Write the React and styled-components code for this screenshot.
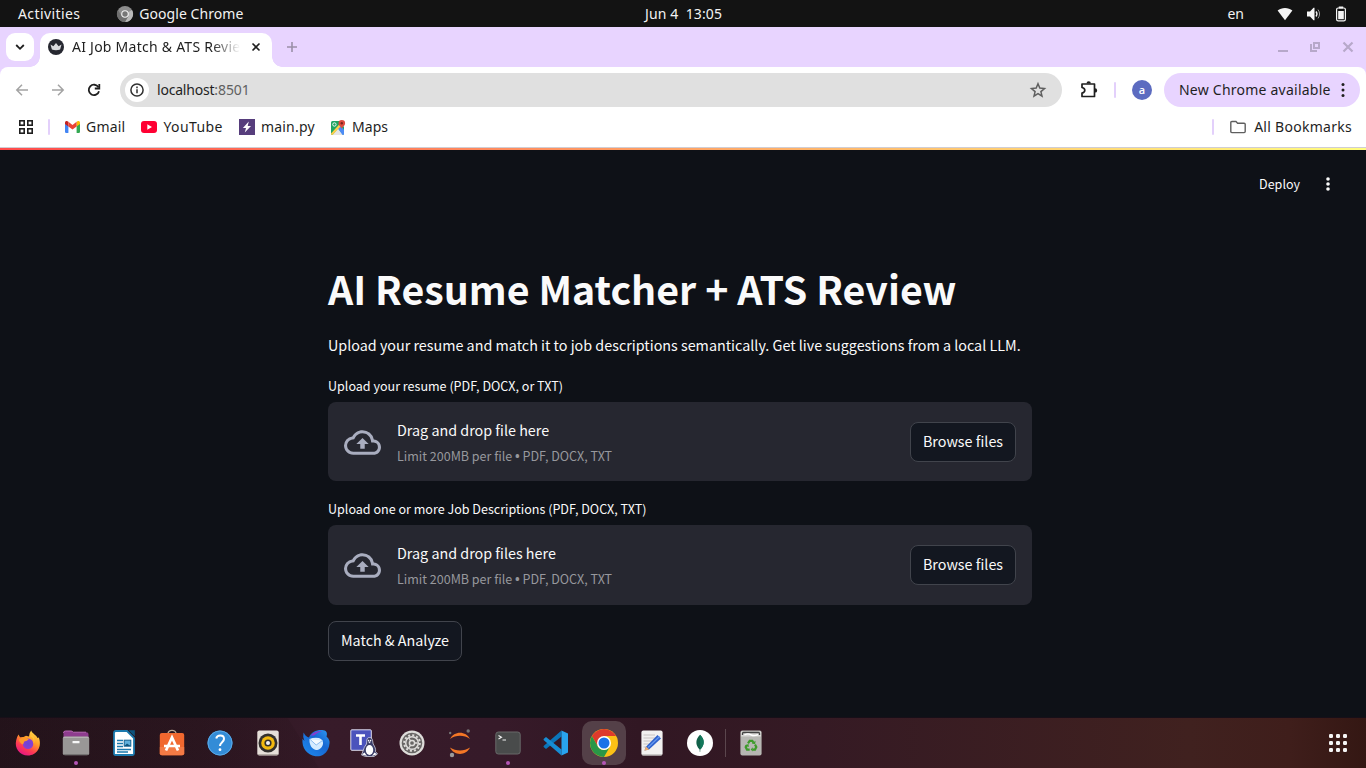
import React from "react";
import styled, { createGlobalStyle } from "styled-components";

const ui = '"Noto Sans", "Open Sans", sans-serif';
const page = '"Noto Sans CJK SC", "Noto Sans", sans-serif';

const Global = createGlobalStyle`
  * { box-sizing: border-box; }
  body { margin: 0; background: #0e1117; overflow: hidden; }
  button { font: inherit; color: inherit; cursor: pointer; }
  svg { display: block; flex: none; overflow: visible; }
`;

const Desktop = styled.div`
  width: 1366px;
  height: 768px;
  display: flex;
  flex-direction: column;
  background: #0e1117;
  font-family: ${ui};
  font-size: 14px;
`;

const Label = styled.span`
  white-space: pre;
  line-height: 20px;
  letter-spacing: ${(p) => p.$track || 0}px;
`;

/* System bar */
const SystemBar = styled.header`
  height: 27px;
  background: #131313;
  color: #f2f2f2;
  display: grid;
  grid-template-columns: 1fr auto 1fr;
  align-items: center;
  padding: 0 19px 0 18px;
`;
const SystemLeft = styled.div`
  display: flex;
  align-items: center;
  svg { margin: 0 6px 0 37px; }
`;
const Clock = styled(Label)`
  padding-left: 2px;
`;
const SystemRight = styled.div`
  display: flex;
  align-items: center;
  justify-content: flex-end;
  svg:first-of-type { margin-left: 33px; }
`;
const StatusIcons = styled.div`
  display: flex;
  align-items: center;
  gap: 13px;
`;

/* Browser */
const TabStrip = styled.div`
  height: 40px;
  background: #e8d4ff;
  display: flex;
  align-items: flex-end;
  padding: 0 12px 0 6px;
`;
const TabSearch = styled.button`
  width: 28px;
  height: 28px;
  margin: 0 6px 6px 0;
  border: 0;
  border-radius: 9px;
  background: #fff;
  display: grid;
  place-items: center;
  padding: 0;
`;
const Tab = styled.div`
  position: relative;
  width: 232px;
  height: 34px;
  border-radius: 10px 10px 0 0;
  background: #fff;
  color: #1f1f1f;
  display: flex;
  align-items: center;
  padding: 0 10px 6px 8px;
  &::before, &::after {
    content: "";
    position: absolute;
    bottom: 0;
    width: 10px;
    height: 10px;
  }
  &::before { right: 100%; background: radial-gradient(circle at 0 0, transparent 9.5px, #fff 10px); }
  &::after { left: 100%; background: radial-gradient(circle at 100% 0, transparent 9.5px, #fff 10px); }
`;
const TabTitle = styled(Label)`
  width: 168px;
  margin: 0 11px 0 8px;
  overflow: hidden;
  mask-image: linear-gradient(to right, #000 140px, transparent 168px);
`;
const NewTab = styled.div`
  margin: 0 auto 14px 14px;
`;
const WindowControls = styled.div`
  display: flex;
  align-items: center;
  gap: 21px;
  margin-bottom: 14px;
`;
const Chrome = styled.div`
  height: 81px;
  background: #e8d4ff;
`;
const ChromeInner = styled.div`
  height: 100%;
  background: #fff;
  border-radius: 8px 8px 0 0;
  border-bottom: 1px solid #cfcdd4;
`;
const Toolbar = styled.div`
  height: 46px;
  display: flex;
  align-items: center;
  padding: 0 6px 0 14px;
`;
const NavButtons = styled.div`
  display: flex;
  gap: 20px;
  margin-right: 18px;
`;
const AddressBar = styled.div`
  width: 942px;
  height: 34px;
  border-radius: 17px;
  background: #e0e0e0;
  color: #1f1f1f;
  display: flex;
  align-items: center;
  padding: 0 16px 0 5px;
  > svg { margin-left: auto; }
`;
const SiteInfo = styled.span`
  width: 24px;
  height: 24px;
  border-radius: 50%;
  background: #fff;
  display: grid;
  place-items: center;
  margin-right: 8px;
`;
const Port = styled(Label)`
  color: #5f5f5f;
`;
const Divider = styled.span`
  width: 2px;
  height: 16px;
  background: #e3d0fb;
  border-radius: 1px;
`;
const ToolbarActions = styled.div`
  display: flex;
  align-items: center;
  margin-left: 16px;
  gap: 16px;
`;
const Avatar = styled.span`
  width: 20px;
  height: 20px;
  border-radius: 50%;
  background: #5c6bc0;
  color: #fff;
  font: 600 11px/19px "Open Sans", sans-serif;
  text-align: center;
`;
const UpdateChip = styled.button`
  width: 196px;
  height: 34px;
  margin-left: auto;
  border: 0;
  border-radius: 17px;
  background: #e8d4ff;
  color: #1f1f1f;
  display: flex;
  align-items: center;
  justify-content: space-between;
  padding: 0 15px;
`;
const BookmarksBar = styled.div`
  height: 28px;
  display: flex;
  align-items: center;
  padding: 0 14px 0 18px;
  color: #1f1f1f;
`;
const BookmarkList = styled.div`
  display: flex;
  align-items: center;
  gap: 16px;
  margin: 0 auto 0 15px;
`;
const Bookmark = styled.span`
  display: flex;
  align-items: center;
  gap: 6px;
`;
const AllBookmarks = styled.span`
  display: flex;
  align-items: center;
  gap: 8px;
  margin-left: 16px;
`;

/* Page */
const Page = styled.main`
  height: 569px;
  display: flex;
  flex-direction: column;
  color: #fafafa;
  font-family: ${page};
  background: #0e1117;
`;
const Decoration = styled.div`
  height: 2px;
  background: linear-gradient(90deg, #ff4b4b, #fffd80);
`;
const PageHeader = styled.div`
  height: 68px;
  display: flex;
  align-items: center;
  justify-content: flex-end;
  gap: 26px;
  padding-right: 36px;
  font-size: 12.53px;
`;
const Content = styled.div`
  width: 704px;
  margin-left: 328px;
  padding-top: 40px;
`;
const Title = styled.h1`
  margin: 0;
  font-size: 39.35px;
  font-weight: 700;
  line-height: 60px;
  white-space: nowrap;
`;
const Intro = styled.p`
  margin: 15px 0 17px;
  font-size: 14.33px;
  line-height: 24px;
  white-space: nowrap;
`;
const Field = styled.section`
  margin-bottom: 16px;
`;
const FieldLabel = styled.div`
  height: 28px;
  font-size: 12.56px;
  line-height: 24px;
`;
const Dropzone = styled.div`
  height: ${(p) => p.$height}px;
  border-radius: 8px;
  background: #262730;
  display: flex;
  align-items: flex-start;
  padding: 20px 16px 0;
  > svg { margin-top: 2px; }
`;
const DropText = styled.div`
  display: flex;
  flex-direction: column;
  margin: -4px auto 0 16px;
  font-size: 14.33px;
  line-height: 24px;
`;
const Hint = styled.small`
  margin-top: 2px;
  font-size: 12.53px;
  color: #97989d;
`;
const Bullet = styled.span`
  font-family: "Open Sans", sans-serif;
  font-weight: 700;
`;
const Button = styled.button`
  width: ${(p) => p.$width}px;
  height: 40px;
  border: 1px solid #41444c;
  border-radius: 8px;
  background: #131720;
  padding: 0 0 4px;
  font-size: 14.33px;
  white-space: nowrap;
`;

/* Dock */
const Dock = styled.footer`
  height: 51px;
  border-top: 1px solid #170f18;
  background:
    linear-gradient(58deg, rgba(20, 8, 12, 0.1) 0 270px, transparent 271px),
    linear-gradient(90deg, #25141c 0, #2d1721 200px, #371b29 320px, #361a29 500px, #311723 640px, #351a24 820px, #40211f 1190px, #3f1e1b 1290px, #341713 1366px);
  display: flex;
  align-items: center;
  padding: 0 4px;
`;
const DockItem = styled.div`
  position: relative;
  width: 44px;
  height: 44px;
  margin: 0 2px;
  border-radius: 10px;
  display: grid;
  place-items: center;
  background: ${(p) => (p.$active ? "#544048" : "transparent")};
  &::after {
    content: "";
    display: ${(p) => (p.$running ? "block" : "none")};
    position: absolute;
    left: 20px;
    bottom: 0;
    width: 4px;
    height: 4px;
    border-radius: 50%;
    background: #b455b6;
  }
`;
const DockDivider = styled.span`
  width: 1px;
  height: 28px;
  background: #5b464d;
  margin: 0 1px;
`;
const AppGrid = styled.div`
  margin-left: auto;
  margin-right: 15px;
`;

const ChromeMono = () => (
  <svg width="16" height="16" viewBox="0 0 16 16">
    <circle cx="8" cy="8" r="8" fill="#8c8c8c" />
    <path d="M8 8 15 4A8 8 0 0 1 8 16L11.5 10Z" fill="#b9b9b9" />
    <path d="M1 4A8 8 0 0 0 8 16L11.4 10 4.6 10Z" fill="#6f6f6f" />
    <circle cx="8" cy="8" r="3.8" fill="#f2f2f2" />
    <circle cx="8" cy="8" r="2.7" fill="#777" />
  </svg>
);
const Wifi = () => (
  <svg width="16" height="14" viewBox="0 0 16 14"><path d="M8 13.3.6 3.5C2.6 1.7 5.2.9 8 .9s5.4.8 7.4 2.6Z" fill="#f5f5f5" /></svg>
);
const Volume = () => (
  <svg width="16" height="16" viewBox="0 0 16 16" fill="none" stroke="#f5f5f5" strokeWidth="1.3">
    <path d="M1 5.500h3L7.500 1.800h1v12.400h-1L4 10.500H1Z" fill="#f5f5f5" stroke="none" />
    <path d="M10 5.500q2 2.500 0 5" />
    <path d="M12 3.600q3.200 4.400 0 8.800" stroke="#999" strokeWidth="1" />
  </svg>
);
const Battery = () => (
  <svg width="12" height="16" viewBox="0 0 12 16">
    <path d="M3.800.5h4.400v2H3.800Z" fill="#f5f5f5" />
    <rect x="1.600" y="2" width="8.800" height="12.800" rx="1.600" fill="none" stroke="#f5f5f5" strokeWidth="1.200" />
    <rect x="3.200" y="5" width="5.600" height="8.200" fill="#f5f5f5" />
  </svg>
);
const Crown = () => (
  <svg width="16" height="16" viewBox="0 0 16 16">
    <circle cx="8" cy="8" r="8" fill="#262730" />
    <path d="M2.500 5.400 5.400 7.200 8 3.900l2.600 3.300 2.900-1.800-1.400 5.200q-4.100 1.300-8.200 0Z" fill="#d9dade" />
  </svg>
);
const Dots = ({ gap = 5, r = 1.6, color }) => (
  <svg width="4" height="16" viewBox="0 0 4 16" fill={color}>
    <circle cx="2" cy={8 - gap} r={r} /><circle cx="2" cy="8" r={r} /><circle cx="2" cy={8 + gap} r={r} />
  </svg>
);
const Cloud = () => (
  <svg width="37" height="37" viewBox="0 0 24 24" fill="#a9adbf">
    <path d="M19.35 10.04A7.49 7.49 0 0 0 12 4C9.110 4 6.600 5.640 5.350 8.040A5.994 5.994 0 0 0 0 14c0 3.310 2.690 6 6 6h13c2.760 0 5-2.240 5-5 0-2.640-2.050-4.780-4.650-4.960zM19 18H6c-2.210 0-4-1.790-4-4 0-2.050 1.530-3.760 3.560-3.970l1.070-.11.5-.95A5.469 5.469 0 0 1 12 6c2.620 0 4.880 1.860 5.390 4.430l.3 1.500 1.530.11A2.980 2.980 0 0 1 22 15c0 1.650-1.350 3-3 3zM8 13h2.550v3h2.900v-3H16l-4-4z" />
  </svg>
);

const Gmail = () => (
  <svg width="15" height="12" viewBox="0 0 15 12">
    <path d="M0 2v8.800Q0 12 1.200 12H3.400V4.200Z" fill="#4285f4" />
    <path d="M15 2v8.800Q15 12 13.800 12H11.600V4.200Z" fill="#34a853" />
    <path d="M11.600.8 11.600 5.500 15 3V1.800C15 .1 13.200-.5 11.600.8Z" fill="#fbbc04" />
    <path d="M0 3 3.400 5.500V.8C1.800-.5 0 .1 0 1.800Z" fill="#c5221f" />
    <path d="M3.400.8 7.500 3.900 11.600.8V5.500L7.500 8.600 3.400 5.500Z" fill="#ea4335" />
  </svg>
);
const YouTube = () => (
  <svg width="16" height="12" viewBox="0 0 16 12"><rect width="16" height="12" rx="3" fill="#ff0033" /><path d="M6.300 3.300 11 6 6.300 8.700Z" fill="#fff" /></svg>
);
const Bolt = () => (
  <svg width="16" height="16" viewBox="0 0 16 16"><rect width="16" height="16" fill="#563d7c" /><path d="M9.800 2.500 3.900 9H7l-1.200 4.600L12 6.900H8.700Z" fill="#fff" /></svg>
);
const MapsIcon = () => (
  <svg width="15" height="15" viewBox="0 0 15 15">
    <path d="M0 2.500Q0 1 1.500 1H9L13 7V13.500Q13 15 11.500 15H1.500Q0 15 0 13.500Z" fill="#1fa463" />
    <path d="M1.500 15 7 8.500 12.500 15Z" fill="#e6e6e6" />
    <path d="M7 8.500 9.600 6 13 9.600V13.500Q13 15 11.500 15Z" fill="#4c8bf5" />
    <path d="M0 13.500 9.500 3 11 5 1.500 15Q0 15 0 13.500Z" fill="#ffd04b" />
    <circle cx="3.400" cy="4.500" r="1.700" fill="none" stroke="#fff" strokeWidth=".9" />
    <path d="M10.800 9C10.500 6.800 7.500 6 7.500 3.200a3.300 3.300 0 0 1 6.600 0C14.100 6 11.100 6.800 10.800 9Z" fill="#dd4b3e" />
    <circle cx="10.800" cy="3.200" r="1.200" fill="#7b231e" />
  </svg>
);
const AppsIcon = () => (
  <svg width="16" height="14" viewBox="0 0 16 14" fill="none" stroke="#1f1f1f" strokeWidth="1.600">
    <rect x="1.800" y=".8" width="4.400" height="4.400" /><rect x="9.800" y=".8" width="4.400" height="4.400" />
    <rect x="1.800" y="8.800" width="4.400" height="4.400" /><rect x="9.800" y="8.800" width="4.400" height="4.400" />
  </svg>
);

const Firefox = () => (
  <svg width="26" height="26" viewBox="0 0 26 26">
    <defs>
      <linearGradient id="ff" x1=".8" y1="0" x2=".25" y2="1"><stop offset="0" stopColor="#ffe14a" /><stop offset=".4" stopColor="#ff9a28" /><stop offset=".7" stopColor="#ff3b52" /><stop offset="1" stopColor="#e3118a" /></linearGradient>
      <radialGradient id="ffc"><stop offset="0" stopColor="#6a45d8" /><stop offset="1" stopColor="#8b3fd0" /></radialGradient>
    </defs>
    <path d="M3.500 4.500 5 7.200 8.500 7 11 5.800 14 6.500Q14 3 16.200.5C17.500 4 21.500 5 22.500 8L23.800 7.500C27.500 17 21.500 25.500 13 25.500S-.8 18 1.200 10.200Q1.800 7 3.500 4.500Z" fill="url(#ff)" />
    <circle cx="13" cy="13.800" r="5.300" fill="url(#ffc)" />
    <path d="M4 9.500 8.500 7 13.800 9.200Q12 11 9.300 11.600L8 14.500Q4.500 13 4 9.500Z" fill="#ff9a2a" />
    <path d="M15 6Q20 8 18.500 14 21 9 17 5Z" fill="#ffc83a" />
  </svg>
);
const Files = () => (
  <svg width="28" height="26" viewBox="0 0 28 26">
    <path d="M1.500 3Q1.500 1 3.500 1H9Q10.500 1 11.200 2.200H24.500Q26.500 2.200 26.500 4.200V12H1.500Z" fill="#8e3c8e" />
    <path d="M1.500 3Q1.500 1 3.500 1H9Q10.500 1 11.200 2.200H24" fill="none" stroke="#b86bb5" />
    <rect x=".8" y="6.500" width="26.400" height="18.800" rx="2" fill="#999796" />
    <path d="M1.500 7.300H26.500" stroke="#bcbab9" /><path d="M1.500 24.500H26.500" stroke="#767473" />
    <rect x="10.500" y="11" width="7" height="2.200" rx=".5" fill="#f7f7f7" />
  </svg>
);
const Writer = () => (
  <svg width="22" height="26" viewBox="0 0 22 26">
    <path d="M3 1H14L21 8V23.500Q21 25 19.500 25H2.500Q1 25 1 23.500V3Q1 1 3 1Z" fill="#fff" stroke="#1b79ad" strokeWidth="1.800" />
    <path d="M15.500.2H21.800V6.500Z" fill="#0d547d" />
    <path d="M4 10.500H10M4 13.500H10M4 16.500H10M4 19.500H18M4 22H15" stroke="#1b79ad" strokeWidth="1.400" />
    <rect x="11.200" y="10.200" width="6.600" height="6" fill="#5fb0dc" stroke="#13618f" /><path d="M11.500 16 14 13.500 17.500 16Z" fill="#0d547d" />
  </svg>
);
const Software = () => (
  <svg width="26" height="26" viewBox="0 0 26 26">
    <path d="M9 5V3.800a4 3.500 0 0 1 8 0V5" fill="none" stroke="#bfa994" strokeWidth="1.300" />
    <rect x=".8" y="3" width="24.400" height="22.300" rx="2" fill="#f1682f" /><path d="M.8 17H25.200V23.300Q25.200 25.300 23.200 25.300H2.800Q.8 25.300.8 23.300Z" fill="#f37a45" />
    <path d="M7 20.500 13 7.500 19 20.500M5 16H21" fill="none" stroke="#fff" strokeWidth="2.700" />
  </svg>
);
const Help = () => (
  <svg width="26" height="26" viewBox="0 0 26 26">
    <circle cx="13" cy="13" r="12.500" fill="#338cd7" /><circle cx="13" cy="13" r="12" fill="none" stroke="#5ba9e6" />
    <path d="M9.200 8.500Q10 5.600 13.200 5.600 17 5.600 17 9C17 12 13 12.500 13 16" fill="none" stroke="#fff" strokeWidth="2" /><circle cx="13" cy="19.700" r="1.400" fill="#fff" />
  </svg>
);
const Speaker = () => (
  <svg width="22" height="26" viewBox="0 0 22 26">
    <rect x=".3" y=".5" width="21.400" height="25" rx="2" fill="#e5dfd9" /><path d="M1 24.500H21" stroke="#b5aea7" />
    <circle cx="11" cy="13" r="9.500" fill="#32302e" /><circle cx="11" cy="13" r="6.800" fill="#f2b90f" /><circle cx="11" cy="13" r="3.600" fill="#32302e" /><circle cx="11" cy="13" r="2" fill="#f2f2f2" />
  </svg>
);
const Thunderbird = () => (
  <svg width="28" height="28" viewBox="0 0 28 28">
    <defs><linearGradient id="tb" x1="0" y1="1" x2="1" y2="0"><stop offset="0" stopColor="#1f8df0" /><stop offset=".6" stopColor="#1767d2" /><stop offset="1" stopColor="#2f9cf5" /></linearGradient></defs>
    <path d="M1.500 3.500Q4 8 7 8.500C9.500 2.500 15 .5 21.500 1.200 25 1.800 25.500 4.500 24.500 7.500Q29 11 27 17.500C25 24.500 19.500 28 13.500 27.200 5 26-.5 19 .5 9.800L2.500 12Q.5 7.500 1.500 3.500Z" fill="url(#tb)" />
    <path d="M8.500 6.500Q13 1.500 20 2 15 3.500 12 6.500Z" fill="#873bcf" />
    <path d="M7.500 10Q12 8 17 9 21.500 10.500 21 15C20 19 17 21 14 21 10 20 7 16 7.500 10Z" fill="#d5ebff" />
    <path d="M8.200 10.500 14.200 16 20.500 11.500" fill="#f5faff" stroke="#8dbdf0" />
  </svg>
);
const Teams = () => (
  <svg width="28" height="28" viewBox="0 0 28 28">
    <rect x=".8" y=".8" width="20.500" height="20.500" rx="1" fill="#4b53bc" stroke="#eeeefc" strokeWidth=".9" />
    <path d="M6 6.500H15M10.500 6.500V16" stroke="#fff" strokeWidth="2.600" />
    <path d="M19.500 8.500C23 8.500 22.500 12.500 23.200 15 25 18 26 20 25.500 22.500L27.500 25 24 27.500H15.500L11.500 26 13 22Q14 18 16.500 15C17 12.500 16 8.500 19.500 8.500Z" fill="#3b3e69" stroke="#e7e8f3" strokeWidth=".7" />
    <ellipse cx="19.500" cy="21" rx="3.700" ry="5" fill="#fff" /><path d="M18 12.500H21L19.500 14.500Z" fill="#e8e8f2" /><circle cx="18.600" cy="11.500" r=".7" fill="#fff" /><circle cx="20.600" cy="11.500" r=".7" fill="#fff" />
    <path d="M12 25.500 14.500 23.500 17 27ZM22 27 24.500 23.500 27 25.300Z" fill="#fff" />
  </svg>
);
const Settings = () => (
  <svg width="26" height="26" viewBox="0 0 26 26">
    <circle cx="13" cy="13" r="12.500" fill="#deddda" /><circle cx="13" cy="13" r="10.300" fill="#686665" />
    <circle cx="13" cy="13" r="7.800" fill="none" stroke="#dedcda" strokeWidth="2" strokeDasharray="2.050 2.030" />
    <circle cx="13" cy="13" r="6.300" fill="none" stroke="#dedcda" strokeWidth="1.500" />
    <circle cx="13" cy="13" r="2.600" fill="none" stroke="#dedcda" strokeWidth="1.500" />
    <path d="M15.500 13H18.500M11.700 11 9.800 8M11.700 15 9.800 18" stroke="#dedcda" strokeWidth="1.300" />
  </svg>
);
const Jupyter = () => (
  <svg width="26" height="28" viewBox="0 0 26 28">
    <path d="M3 10C7 1.500 19 1.500 23 10 17 5.800 9 5.800 3 10ZM3 18.500C7 27 19 27 23 18.500 17 22.500 9 22.500 3 18.500Z" fill="#f37726" />
    <circle cx="21.200" cy="2" r="1.700" fill="#767677" /><circle cx="3.200" cy="4" r="1.200" fill="#767677" /><circle cx="5" cy="26" r="2.200" fill="#9b9b9b" />
  </svg>
);
const Terminal = () => (
  <svg width="26" height="24" viewBox="0 0 26 24">
    <rect x=".8" y="1" width="24.400" height="22" rx="2.500" fill="#494b4b" stroke="#686969" />
    <path d="M3.500 4.500 6.500 6.200 3.500 8M7.500 9H11" fill="none" stroke="#f2f2f2" strokeWidth="1.100" />
  </svg>
);
const VSCode = () => (
  <svg width="26" height="26" viewBox="0 0 26 26">
    <path d="M18.500 6.500 3 19 .6 17V16L18.500.4Z" fill="#0b75ba" />
    <path d="M18.500 19.500 3 7 .6 9V10L18.500 25.600Z" fill="#168dd5" />
    <path d="M18.500.4 25 3.500V22.500L18.500 25.600Z" fill="#29a4ef" />
  </svg>
);
const ChromeIcon = () => (
  <svg width="28" height="28" viewBox="0 0 28 28">
    <circle cx="14" cy="14" r="14" fill="#fbc116" />
    <path d="M1.880 7A14 14 0 0 1 26.120 7H14L8 17.500Z" fill="#dd3a2c" />
    <path d="M1.880 7A14 14 0 0 0 14 28L20.060 17.500A7 7 0 0 1 7.940 17.500Z" fill="#299747" />
    <circle cx="14" cy="14" r="7" fill="#fff" /><circle cx="14" cy="14" r="5.500" fill="#1a73e8" />
  </svg>
);
const TextEditor = () => (
  <svg width="22" height="26" viewBox="0 0 22 26">
    <rect x=".4" y=".5" width="21.200" height="25" rx="2" fill="#f2f1f0" /><path d="M1 24.800H21" stroke="#bab8b6" />
    <path d="M2.500 5H14M2.500 8H17M2.500 11H12M2.500 14H10M2.500 17H8" stroke="#c7c4c1" strokeWidth="1.200" />
    <path d="M3.500 20.500 5 16.800 16.500 5 20 8.500 8 19.500Z" fill="#2f62cd" /><path d="M7 17.500 18.500 6.500" stroke="#679af0" strokeWidth="1.200" />
    <path d="M3.300 20.700 5 16.500 8.300 19.500Z" fill="#ecae74" />
  </svg>
);
const Compass = () => (
  <svg width="26" height="26" viewBox="0 0 26 26">
    <circle cx="13" cy="13" r="13" fill="#fff" />
    <path d="M13 4.800C17.800 9 18 15 13.300 19.500L13.200 22H12.800L12.600 19.500C8 15 8.500 9 13 4.800Z" fill="#116149" /><path d="M13 4.800C17.800 9 18 15 13.300 19.500Z" fill="#13795b" />
  </svg>
);
const Trash = () => (
  <svg width="22" height="26" viewBox="0 0 22 26">
    <rect x=".4" y=".5" width="21.200" height="25" rx="2" fill="#b7b7b3" /><path d="M1 1.500H21V6.500H1Z" fill="#d8d7d5" />
    <path d="M2.500 5V3.500Q2.500 2.500 3.500 2.500H18.500Q19.500 2.500 19.500 3.500V5" fill="none" stroke="#444" strokeWidth="1.300" /><path d="M4.500 4.800Q8 3 11 4.800T18 4.600" stroke="#fff" strokeWidth="1.400" fill="none" />
    <g fill="none" stroke="#3d9b2a" strokeWidth="2.200"><path d="M8 13.300 9.700 10.800H12.300L13.500 12.800" /><path d="M15 14.500 16.300 17 15 19.600H12.500" /><path d="M9.700 19.600H7L5.700 17 7 15" /></g>
    <path d="M11.800 13.700 15.200 14 15.500 10.800ZM12.700 17.300V21.600L10.700 19.500ZM4.800 15.500 8.500 14 8.800 17Z" fill="#3d9b2a" />
  </svg>
);

const bookmarks = [
  ["Gmail", Gmail, 0.2],
  ["YouTube", YouTube, 0.42],
  ["main.py", Bolt, 0.22],
  ["Maps", MapsIcon, 0.1],
];
const apps = [
  { Icon: Firefox }, { Icon: Files, running: true }, { Icon: Writer }, { Icon: Software }, { Icon: Help },
  { Icon: Speaker }, { Icon: Thunderbird }, { Icon: Teams }, { Icon: Settings }, { Icon: Jupyter },
  { Icon: Terminal, running: true }, { Icon: VSCode }, { Icon: ChromeIcon, running: true, active: true },
  { Icon: TextEditor }, { Icon: Compass },
];
const uploads = [
  { label: "Upload your resume (PDF, DOCX, or TXT)", prompt: "Drag and drop file here", height: 79 },
  { label: "Upload one or more Job Descriptions (PDF, DOCX, TXT)", prompt: "Drag and drop files here", height: 80 },
];

function Uploader({ label, prompt, height }) {
  return (
    <Field>
      <FieldLabel>{label}</FieldLabel>
      <Dropzone $height={height}>
        <Cloud />
        <DropText>
          <span>{prompt}</span>
          <Hint>Limit 200MB per file <Bullet>•</Bullet> PDF, DOCX, TXT</Hint>
        </DropText>
        <Button $width={106}>Browse files</Button>
      </Dropzone>
    </Field>
  );
}

export default function App() {
  return (
    <Desktop>
      <Global />
      <SystemBar>
        <SystemLeft>
          <Label $track={0.4}>Activities</Label>
          <ChromeMono />
          <Label $track={0.05}>Google Chrome</Label>
        </SystemLeft>
        <Clock $track={0.1}>Jun 4  13:05</Clock>
        <SystemRight>
          <Label>en</Label>
          <StatusIcons><Wifi /><Volume /><Battery /></StatusIcons>
        </SystemRight>
      </SystemBar>

      <TabStrip>
        <TabSearch>
          <svg width="10" height="6" viewBox="0 0 10 6" fill="none" stroke="#1f1f1f" strokeWidth="1.800"><path d="m1.200 1 3.800 3.800L8.800 1" /></svg>
        </TabSearch>
        <Tab>
          <Crown />
          <TabTitle $track={0.25}>AI Job Match &amp; ATS Review</TabTitle>
          <svg width="10" height="10" viewBox="0 0 10 10" stroke="#1f1f1f" strokeWidth="1.600"><path d="m1.500 1.500 7 7m0-7-7 7" /></svg>
        </Tab>
        <NewTab>
          <svg width="12" height="12" viewBox="0 0 12 12" stroke="#9a8fa8" strokeWidth="1.600"><path d="M6 1v10M1 6h10" /></svg>
        </NewTab>
        <WindowControls>
          <svg width="12" height="12" viewBox="0 0 12 12" stroke="#b7a8ca" strokeWidth="2"><path d="M2 10h10" /></svg>
          <svg width="12" height="12" viewBox="0 0 12 12" fill="none" stroke="#b7a8ca" strokeWidth="2"><path d="M5 2h5v5H5Z" /><path d="M2 3v7h6" /></svg>
          <svg width="12" height="12" viewBox="0 0 12 12" stroke="#b7a8ca" strokeWidth="2.200"><path d="m1.500 1.500 9 9m0-9-9 9" /></svg>
        </WindowControls>
      </TabStrip>

      <Chrome>
        <ChromeInner>
          <Toolbar>
            <NavButtons>
              <svg width="16" height="16" viewBox="0 0 16 16" fill="none" stroke="#a3a3a3" strokeWidth="1.500"><path d="M14 8H3M8 2.800 2.800 8 8 13.200" /></svg>
              <svg width="16" height="16" viewBox="0 0 16 16" fill="none" stroke="#a3a3a3" strokeWidth="1.500"><path d="M2 8h11M8 2.800 13.200 8 8 13.200" /></svg>
              <svg width="16" height="16" viewBox="0 0 16 16" fill="none" stroke="#1f1f1f" strokeWidth="1.800"><path d="M13 9.200A5.200 5.200 0 1 1 12.400 5.200" /><path d="M13.300 2v4.500H8.800" /></svg>
            </NavButtons>
            <AddressBar>
              <SiteInfo>
                <svg width="14" height="14" viewBox="0 0 14 14" fill="none" stroke="#303030" strokeWidth="1.500"><circle cx="7" cy="7" r="6.100" /><path d="M7 6.300v4M7 3.600v1.600" /></svg>
              </SiteInfo>
              <Label $track={-0.2}>localhost</Label>
              <Port $track={-0.1}>:8501</Port>
              <svg width="16" height="16" viewBox="0 0 16 16" fill="none" stroke="#5f5f5f" strokeWidth="1.500"><path d="m8 1.800 1.800 4.300 4.700.4-3.600 3.100 1.100 4.600L8 11.700l-4 2.500 1.100-4.600L1.500 6.500l4.700-.4Z" /></svg>
            </AddressBar>
            <ToolbarActions>
              <svg width="20" height="20" viewBox="-1 0 20 20"><path d="M3 4h12.500v12.500H3v-3.400q2.800-.6 2.800-2.800T3 7.500Z" fill="none" stroke="#1f1f1f" strokeWidth="1.700" strokeLinejoin="round" /><path d="M7.500 3.500a2.200 2.200 0 0 1 4.400 0ZM16 8.200a2.200 2.200 0 0 1 0 4.400Z" fill="#1f1f1f" /></svg>
              <Divider />
              <Avatar>a</Avatar>
            </ToolbarActions>
            <UpdateChip>
              <Label $track={0.23}>New Chrome available</Label>
              <Dots color="#1f1f1f" gap={5.5} r={1.5} />
            </UpdateChip>
          </Toolbar>
          <BookmarksBar>
            <AppsIcon />
            <BookmarkList as="nav">
              {bookmarks.map(([name, Icon, track], i) => (
                <React.Fragment key={name}>
                  {i === 0 && <FirstDivider />}
                  <Bookmark><Icon /><Label $track={track}>{name}</Label></Bookmark>
                </React.Fragment>
              ))}
            </BookmarkList>
            <Divider />
            <AllBookmarks>
              <svg width="16" height="14" viewBox="0 0 16 14" fill="none" stroke="#5f5f5f" strokeWidth="1.400"><path d="M.8 2.600Q.8 1.500 1.900 1.500H6l1.600 1.700h6.500q1.100 0 1.100 1.100v7.200q0 1.100-1.100 1.100H1.900q-1.100 0-1.100-1.100Z" /></svg>
              <Label $track={0.28}>All Bookmarks</Label>
            </AllBookmarks>
          </BookmarksBar>
        </ChromeInner>
      </Chrome>

      <Page>
        <Decoration />
        <PageHeader>
          <Label>Deploy</Label>
          <Dots color="#fafafa" gap={5} r={1.8} />
        </PageHeader>
        <Content>
          <Title>AI Resume Matcher + ATS Review</Title>
          <Intro>Upload your resume and match it to job descriptions semantically. Get live suggestions from a local LLM.</Intro>
          {uploads.map((u) => <Uploader key={u.label} {...u} />)}
          <Button $width={134}>Match &amp; Analyze</Button>
        </Content>
      </Page>

      <Dock>
        {apps.map(({ Icon, running, active }, i) => (
          <DockItem key={i} $running={running} $active={active}><Icon /></DockItem>
        ))}
        <DockDivider />
        <DockItem><Trash /></DockItem>
        <AppGrid>
          <svg width="18" height="18" viewBox="0 0 18 18" fill="#f5f5f5">
            {[0, 7, 14].map((y) => [0, 7, 14].map((x) => <rect key={x + "-" + y} x={x} y={y} width="4" height="4" rx="1.200" />))}
          </svg>
        </AppGrid>
      </Dock>
    </Desktop>
  );
}

const FirstDivider = styled(Divider)`
  margin: 0 -1px;
`;
